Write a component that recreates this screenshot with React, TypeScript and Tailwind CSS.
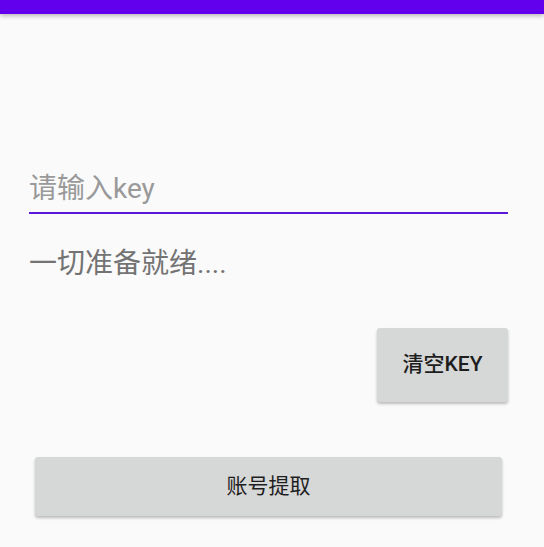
import { useState } from "react";

const FONT = "font-['Roboto','Noto_Sans_CJK_SC',sans-serif]";

export default function App() {
  const [key, setKey] = useState("");
  const [status, setStatus] = useState("一切准备就绪....");

  return (
    <div className={`min-h-[547px] bg-[#fafafa] ${FONT}`}>
      <div className="h-[14px] bg-[#6200ee] shadow-[0_2px_4px_rgba(0,0,0,0.25)]" />

      <div className="pl-[29px] pr-[36px] pt-[146px]">
        <input
          value={key}
          onChange={e => setKey(e.target.value)}
          placeholder="请输入key"
          className="block w-full h-[54px] pt-[4px] bg-transparent border-b-2 border-[#5a18d8] text-[28px] text-[#333] outline-none placeholder:text-[#999]"
        />
        <p className="mt-[30px] text-[28px] leading-[40px] text-[#737373]">{status}</p>

        <div className="flex justify-end mt-[44px]">
          <button
            onClick={() => { setKey(""); setStatus("一切准备就绪...."); }}
            className="w-[131px] h-[74px] rounded-[3px] bg-[#d6d7d7] text-[21px] font-medium text-[#1e1e1e] shadow-[0_2px_3px_rgba(0,0,0,0.25)]"
          >
            清空KEY
          </button>
        </div>
      </div>

      <div className="pl-[35px] pr-[42px] pt-[55px]">
        <button className="w-full h-[59px] rounded-[3px] bg-[#d6d7d7] text-[21px] text-[#1e1e1e] shadow-[0_2px_3px_rgba(0,0,0,0.25)]">
          账号提取
        </button>
      </div>
    </div>
  );
}
